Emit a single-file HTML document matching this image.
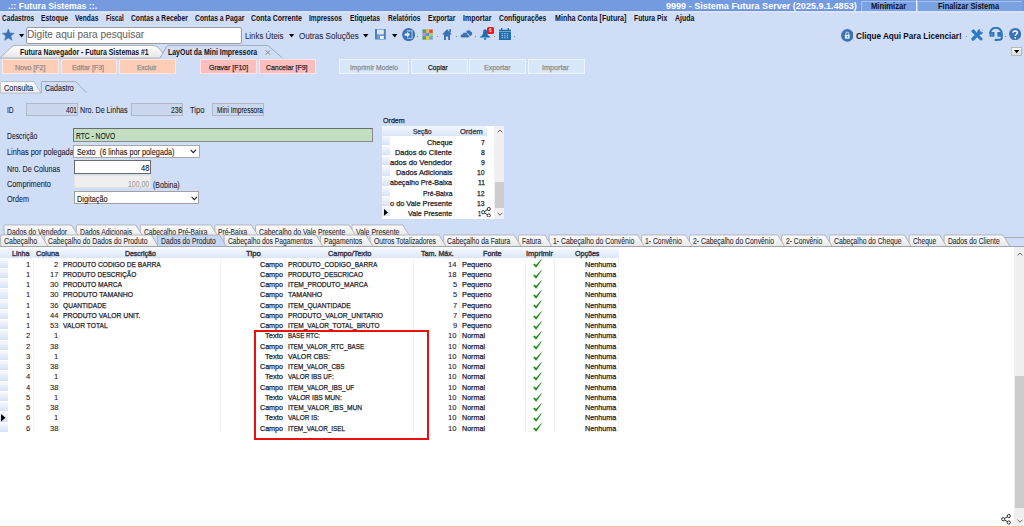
<!DOCTYPE html><html><head><meta charset="utf-8"><style>
html,body{margin:0;padding:0;width:1024px;height:527px;overflow:hidden;background:#d0ddf7}
body{position:relative;font-family:"Liberation Sans",sans-serif}
.t{position:absolute;white-space:pre;line-height:1;transform-origin:0 0;-webkit-text-stroke:0.25px currentColor}
.t.bb{-webkit-text-stroke:0}
.t.tl{-webkit-text-stroke:0.08px currentColor}
.b{position:absolute;display:block}
</style></head><body>
<div class="b" style="left:0px;top:0px;width:1024px;height:11px;background:#749be0"></div>
<div class="b" style="left:0px;top:10px;width:1024px;height:1px;background:#6d96dc"></div>
<div class="t bb" style="left:7.80px;top:2.21px;font-size:9.2px;color:#fff;font-weight:bold;transform:scaleX(0.9483);">.:: Futura Sistemas ::.</div>
<div class="t bb" style="left:665.80px;top:2.21px;font-size:9.2px;color:#fff;font-weight:bold;transform:scaleX(0.9854);">9999 - Sistema Futura Server (2025.9.1.4853)</div>
<div class="b" style="left:861px;top:1px;width:55px;height:10px;background:#7ba2e2;border-top:1px solid #a9c2ee;border-left:1px solid #a9c2ee;box-sizing:border-box"></div>
<div class="b" style="left:916px;top:0px;width:1px;height:11px;background:#e8f0ff"></div>
<div class="b" style="left:917px;top:1px;width:105px;height:10px;background:#7ba2e2;border-top:1px solid #a9c2ee;border-left:1px solid #a9c2ee;box-sizing:border-box"></div>
<div class="t bb" style="left:870.90px;top:2.38px;font-size:9px;color:#111;font-weight:bold;transform:scaleX(0.8480);">Minimizar</div>
<div class="t bb" style="left:937.90px;top:2.38px;font-size:9px;color:#111;font-weight:bold;transform:scaleX(0.8302);">Finalizar Sistema</div>
<div class="b" style="left:0px;top:11px;width:1024px;height:2px;background:#d8e3f8"></div>
<div class="t bb" style="left:1.60px;top:14.07px;font-size:8.9px;color:#101020;font-weight:bold;transform:scaleX(0.7397);">Cadastros</div>
<div class="t bb" style="left:41.00px;top:14.07px;font-size:8.9px;color:#101020;font-weight:bold;transform:scaleX(0.7690);">Estoque</div>
<div class="t bb" style="left:74.80px;top:14.07px;font-size:8.9px;color:#101020;font-weight:bold;transform:scaleX(0.7508);">Vendas</div>
<div class="t bb" style="left:105.70px;top:14.07px;font-size:8.9px;color:#101020;font-weight:bold;transform:scaleX(0.7015);">Fiscal</div>
<div class="t bb" style="left:130.50px;top:14.07px;font-size:8.9px;color:#101020;font-weight:bold;transform:scaleX(0.7581);">Contas a Receber</div>
<div class="t bb" style="left:194.75px;top:14.07px;font-size:8.9px;color:#101020;font-weight:bold;transform:scaleX(0.7640);">Contas a Pagar</div>
<div class="t bb" style="left:251.00px;top:14.07px;font-size:8.9px;color:#101020;font-weight:bold;transform:scaleX(0.7874);">Conta Corrente</div>
<div class="t bb" style="left:309.00px;top:14.07px;font-size:8.9px;color:#101020;font-weight:bold;transform:scaleX(0.7413);">Impressos</div>
<div class="t bb" style="left:350.00px;top:14.07px;font-size:8.9px;color:#101020;font-weight:bold;transform:scaleX(0.7489);">Etiquetas</div>
<div class="t bb" style="left:388.00px;top:14.07px;font-size:8.9px;color:#101020;font-weight:bold;transform:scaleX(0.7468);">Relatórios</div>
<div class="t bb" style="left:428.00px;top:14.07px;font-size:8.9px;color:#101020;font-weight:bold;transform:scaleX(0.7514);">Exportar</div>
<div class="t bb" style="left:463.00px;top:14.07px;font-size:8.9px;color:#101020;font-weight:bold;transform:scaleX(0.7895);">Importar</div>
<div class="t bb" style="left:499.00px;top:14.07px;font-size:8.9px;color:#101020;font-weight:bold;transform:scaleX(0.7623);">Configurações</div>
<div class="t bb" style="left:554.50px;top:14.07px;font-size:8.9px;color:#101020;font-weight:bold;transform:scaleX(0.7991);">Minha Conta [Futura]</div>
<div class="t bb" style="left:633.75px;top:14.07px;font-size:8.9px;color:#101020;font-weight:bold;transform:scaleX(0.7640);">Futura Pix</div>
<div class="t bb" style="left:674.50px;top:14.07px;font-size:8.9px;color:#101020;font-weight:bold;transform:scaleX(0.7867);">Ajuda</div>
<svg class="b" style="left:2px;top:28.9px" width="13" height="12" viewBox="0 0 13 12"><path d="M6.30 -0.10 L7.89 4.02 L12.29 4.25 L8.87 7.03 L10.00 11.30 L6.30 8.90 L2.60 11.30 L3.73 7.03 L0.31 4.25 L4.71 4.02Z" fill="#3a72b5" stroke="#3a72b5" stroke-width="0.5" stroke-linejoin="round"/></svg>
<svg class="b" style="left:18.5px;top:33.5px" width="6" height="4" viewBox="0 0 6 4"><path d="M0 0H5.2L2.6 3.4Z" fill="#000"/></svg>
<div class="b" style="left:25.5px;top:26.5px;width:216px;height:17px;background:#fff;border:1px solid #9a9a9a;border-radius:2px;box-sizing:border-box"></div>
<div class="t tl" style="left:27.30px;top:29.17px;font-size:11.5px;color:#666;transform:scaleX(0.8772);">Digite aqui para pesquisar</div>
<div class="t tl" style="left:244.80px;top:31.91px;font-size:9.2px;color:#2a2a40;transform:scaleX(0.8556);">Links Úteis</div>
<svg class="b" style="left:288.5px;top:34px" width="6" height="4" viewBox="0 0 6 4"><path d="M0 0H5.2L2.6 3.4Z" fill="#000"/></svg>
<div class="t tl" style="left:298.75px;top:31.91px;font-size:9.2px;color:#2a2a40;transform:scaleX(0.8799);">Outras Soluções</div>
<svg class="b" style="left:362.5px;top:33.5px" width="6" height="4" viewBox="0 0 6 4"><path d="M0 0H5.5L2.75 3.4Z" fill="#000"/></svg>
<svg class="b" style="left:375px;top:29px" width="11" height="10.6" viewBox="0 0 11 10.6"><rect x="0" y="0" width="10.8" height="10.6" rx="0.6" fill="#4a80c0"/><rect x="1.8" y="0" width="7.2" height="0.9" fill="#8ab0dc"/><rect x="2" y="0.9" width="6.8" height="4.4" fill="#e2e9f3"/><rect x="2" y="2.8" width="6.8" height="0.9" fill="#e4dcc8"/><rect x="2" y="5.3" width="6.8" height="1.3" fill="#8fb3dc"/><rect x="2" y="7" width="6.8" height="3" fill="#eef3fa"/><rect x="2" y="7" width="3" height="3" fill="#6f9ad0"/></svg>
<svg class="b" style="left:391.5px;top:33.5px" width="6" height="4" viewBox="0 0 6 4"><path d="M0 0H5.5L2.75 3.4Z" fill="#000"/></svg>
<svg class="b" style="left:401.9px;top:27.9px" width="13.2" height="13.2" viewBox="0 0 13.2 13.2"><circle cx="6.6" cy="6.6" r="6.5" fill="#3a72b4"/><path d="M4.8 2.9H10.1V10.3H4.8" fill="none" stroke="#a9c5e6" stroke-width="1.1"/><path d="M2.6 5.5H5.2V3.8L8 6.6L5.2 9.4V7.7H2.6Z" fill="#e8f0fa"/></svg>
<div class="b" style="left:417.0px;top:36px;width:1px;height:1px;background:#7a8aa0"></div>
<div class="b" style="left:436.5px;top:36px;width:1px;height:1px;background:#7a8aa0"></div>
<div class="b" style="left:455.5px;top:36px;width:1px;height:1px;background:#7a8aa0"></div>
<div class="b" style="left:474.7px;top:36px;width:1px;height:1px;background:#7a8aa0"></div>
<div class="b" style="left:494.0px;top:36px;width:1px;height:1px;background:#7a8aa0"></div>
<div class="b" style="left:513.8px;top:36px;width:1px;height:1px;background:#7a8aa0"></div>
<svg class="b" style="left:422.2px;top:28.9px" width="11.3" height="11.1" viewBox="0 0 11.3 11.1"><rect width="11.3" height="11.1" fill="#bcbcbc"/><rect x="0.70" y="0.70" width="3.3" height="3.25" fill="#3daa6c"/><rect x="4.00" y="0.70" width="3.3" height="3.25" fill="#f2b24e"/><rect x="7.30" y="0.70" width="3.3" height="3.25" fill="#e04a36"/><rect x="0.70" y="3.95" width="3.3" height="3.25" fill="#c08ad6"/><rect x="4.00" y="3.95" width="3.3" height="3.25" fill="#5c8ee6"/><rect x="7.30" y="3.95" width="3.3" height="3.25" fill="#9fd65c"/><rect x="0.70" y="7.20" width="3.3" height="3.25" fill="#3aa88c"/><rect x="4.00" y="7.20" width="3.3" height="3.25" fill="#e6d21e"/><rect x="7.30" y="7.20" width="3.3" height="3.25" fill="#6aa6e0"/></svg>
<svg class="b" style="left:442px;top:29px" width="10" height="11" viewBox="0 0 10 11"><path d="M5 0.3L9.9 5.5H0.1Z" fill="#3a6fb0"/><rect x="7.3" y="0.1" width="1.6" height="3.2" fill="#3a6fb0"/><path d="M2 5.2H8V10.9H6.2V7.4H3.8V10.9H2Z" fill="#3a6fb0"/></svg>
<svg class="b" style="left:460px;top:30.4px" width="12.5" height="8.2" viewBox="0 0 12.5 8.2"><path d="M6 2.2C6.4 0.9 7.4 0.2 8.6 0.2C9.8 0.2 10.6 0.9 10.9 1.8C11.9 2 12.3 2.9 12.1 3.9C11.9 5 11 5.8 10 5.9H9.4C9.3 4.2 8 3.2 6.5 3.3Z" fill="#3a6fb0"/><path d="M1.8 7.8H7.8C9 7.8 9.5 7 9.4 6.1C9.3 5.2 8.6 4.6 7.8 4.6C7.6 3.2 6.4 2.3 5 2.3C3.6 2.3 2.6 3.1 2.3 4.3C1 4.4 0.3 5.2 0.3 6.1C0.3 7.1 1 7.8 1.8 7.8Z" fill="#3a6fb0" stroke="#d0ddf7" stroke-width="0.6"/></svg>
<svg class="b" style="left:480px;top:28.6px" width="10.6" height="11.2" viewBox="0 0 10.6 11.2"><path d="M5.1 0.3C6.4 0.3 7 1.5 7.2 3.5C7.4 5.6 8 6.6 10.3 8V8.6H0V8C2.3 6.6 2.9 5.6 3.1 3.5C3.3 1.5 3.8 0.3 5.1 0.3Z" fill="#1f6fb0"/><rect x="4" y="8.8" width="2.3" height="2.2" rx="0.7" fill="#3f84c0"/></svg>
<div class="b" style="left:486.6px;top:26.2px;width:7.8px;height:8.1px;background:#d8e6f8;border-radius:2px"></div>
<div class="b" style="left:487.1px;top:26.8px;width:6.8px;height:6.9px;background:#fa1212;border-radius:1.5px"></div>
<div class="t" style="left:489.30px;top:27.99px;font-size:5.8px;color:#ffd8d8;transform:scaleX(0.7752);">6</div>
<svg class="b" style="left:499.2px;top:27.8px" width="12" height="12.6" viewBox="0 0 12 12.6"><rect x="0" y="1.7" width="11.9" height="1.7" fill="#1c6cb0"/><rect x="2" y="0" width="1.3" height="2.2" fill="#1c6cb0"/><rect x="8.6" y="0" width="1.3" height="2.2" fill="#1c6cb0"/><rect x="0" y="3.8" width="11.9" height="8.7" fill="#1c6cb0"/><rect x="2.60" y="5.20" width="1.5" height="1.1" fill="#a9c6e6"/><rect x="5.15" y="5.20" width="1.5" height="1.1" fill="#a9c6e6"/><rect x="7.70" y="5.20" width="1.5" height="1.1" fill="#a9c6e6"/><rect x="2.60" y="7.20" width="1.5" height="1.1" fill="#a9c6e6"/><rect x="5.15" y="7.20" width="1.5" height="1.1" fill="#a9c6e6"/><rect x="7.70" y="7.20" width="1.5" height="1.1" fill="#a9c6e6"/><rect x="2.60" y="9.20" width="1.5" height="1.1" fill="#a9c6e6"/><rect x="5.15" y="9.20" width="1.5" height="1.1" fill="#a9c6e6"/><rect x="7.70" y="9.20" width="1.5" height="1.1" fill="#a9c6e6"/></svg>
<svg class="b" style="left:840.9px;top:29px" width="12.6" height="12.8" viewBox="0 0 12.6 12.8"><circle cx="6.3" cy="6.4" r="6.3" fill="#3d72b2"/><rect x="3.9" y="5.8" width="4.8" height="4" rx="0.5" fill="#dfe8f4"/><path d="M4.8 5.9V4.4C4.8 2.8 7.8 2.8 7.8 4.4V5.9" fill="none" stroke="#dfe8f4" stroke-width="1"/><rect x="5.9" y="6.9" width="0.8" height="1.6" fill="#3d72b2"/></svg>
<div class="t bb" style="left:856.20px;top:31.80px;font-size:9.1px;color:#0c0c18;font-weight:bold;transform:scaleX(0.8967);">Clique Aqui Para Licenciar!</div>
<div class="b" style="left:966px;top:36px;width:1px;height:1px;background:#7a8aa0"></div>
<svg class="b" style="left:970.5px;top:28.7px" width="12" height="12" viewBox="0 0 12 12"><path d="M2.2 2.2L10 10" stroke="#2a78c8" stroke-width="3" stroke-linecap="round"/><path d="M2 10L8 4" stroke="#2a78c8" stroke-width="3.2" stroke-linecap="round"/><circle cx="9" cy="3" r="2.8" fill="#2a78c8"/><path d="M9.6 -0.4L12.4 2.4L10.8 3.6L8.6 1.4Z" fill="#d0ddf7"/><ellipse cx="2.6" cy="2.4" rx="2" ry="1.7" transform="rotate(45 2.6 2.4)" fill="#2a78c8"/></svg>
<svg class="b" style="left:988.6px;top:27.3px" width="14" height="14.2" viewBox="0 0 14 14.2"><path d="M1 6.6A5.9 5.9 0 0 1 12.8 6.6V10.6Q12.8 12.8 10.6 12.8H6.5" fill="none" stroke="#2f74b8" stroke-width="2"/><rect x="0.5" y="4.9" width="5" height="4.8" rx="0.7" fill="#2f74b8"/><rect x="2.6" y="5.6" width="0.7" height="3.6" fill="#8fb2dc"/><rect x="8.4" y="4.9" width="3.6" height="4.8" rx="0.7" fill="#2f74b8"/><rect x="5.6" y="11.9" width="3.4" height="2.1" rx="0.5" fill="#2f74b8"/></svg>
<div class="b" style="left:1004.5px;top:36px;width:1px;height:1px;background:#7a8aa0"></div>
<svg class="b" style="left:1008.75px;top:28.1px" width="12.2" height="12.2" viewBox="0 0 12.2 12.2"><circle cx="6.1" cy="6.1" r="6.1" fill="#3d72b2"/><path d="M4 4.7C4 2.3 8.4 2.3 8.4 4.7C8.4 6.2 6.2 6.3 6.2 8" fill="none" stroke="#fff" stroke-width="1.5"/><circle cx="6.2" cy="9.8" r="0.9" fill="#fff"/></svg>
<div class="b" style="left:1011.3px;top:46.5px;width:11px;height:9.6px;background:linear-gradient(#fafafa,#dcdcdc);border:1px solid #b8b8b8;box-sizing:border-box"></div>
<svg class="b" style="left:1014px;top:50px" width="6" height="4" viewBox="0 0 6 4"><path d="M0 0H5.4L2.7 3.2Z" fill="#000"/></svg>
<svg class="b" style="left:0;top:44px" width="290" height="15" viewBox="0 0 290 15"><path d="M160 13.8 L166.3 3 Q167.3 1.4 169.5 1.4 H266 Q268 1.4 269 2.4 L282.5 14" fill="none" stroke="#9aa0aa" stroke-width="0.8"/><defs><linearGradient id="tg" x1="0" y1="0" x2="0" y2="1"><stop offset="0" stop-color="#ffffff"/><stop offset="1" stop-color="#e6e6e6"/></linearGradient></defs><path d="M0 14 L12 2.6 Q13.5 1.4 16 1.4 H152 Q156 1.4 158 3.4 L163 9 L160 14Z" fill="url(#tg)" stroke="#a0a4aa" stroke-width="0.8"/></svg>
<div class="t bb" style="left:19.50px;top:49.06px;font-size:8.2px;color:#101020;font-weight:bold;transform:scaleX(0.8444);">Futura Navegador - Futura Sistemas #1</div>
<div class="t bb" style="left:168.40px;top:49.06px;font-size:8.2px;color:#101020;font-weight:bold;transform:scaleX(0.8489);">LayOut da Mini Impressora</div>
<svg class="b" style="left:264.5px;top:50px" width="6" height="5" viewBox="0 0 6 5"><path d="M0.5 0.3L5.3 4.7M5.3 0.3L0.5 4.7" stroke="#8a8a8a" stroke-width="1"/></svg>
<div class="b" style="left:2.2px;top:59.2px;width:56.7px;height:15.3px;background:#fdcdb5;border:1px solid rgba(255,255,255,0.55);box-sizing:border-box"></div>
<div class="t" style="left:14.80px;top:64.30px;font-size:7.8px;color:#8c8c8c;transform:scaleX(0.9020);">Novo [F2]</div>
<div class="b" style="left:60.6px;top:59.2px;width:56.6px;height:15.3px;background:#fdcdb5;border:1px solid rgba(255,255,255,0.55);box-sizing:border-box"></div>
<div class="t" style="left:71.90px;top:64.30px;font-size:7.8px;color:#8c8c8c;transform:scaleX(0.8893);">Editar [F3]</div>
<div class="b" style="left:119px;top:59.2px;width:56.8px;height:15.3px;background:#fdcdb5;border:1px solid rgba(255,255,255,0.55);box-sizing:border-box"></div>
<div class="t" style="left:136.70px;top:64.30px;font-size:7.8px;color:#8c8c8c;transform:scaleX(0.8352);">Excluir</div>
<div class="b" style="left:200.3px;top:59.2px;width:56.4px;height:15.3px;background:#ffbebe;border:1px solid rgba(255,255,255,0.55);box-sizing:border-box"></div>
<div class="t" style="left:208.60px;top:64.30px;font-size:7.8px;color:#2a2a2a;transform:scaleX(0.8931);">Gravar [F10]</div>
<div class="b" style="left:258.9px;top:59.2px;width:56.7px;height:15.3px;background:#ffbebe;border:1px solid rgba(255,255,255,0.55);box-sizing:border-box"></div>
<div class="t" style="left:265.60px;top:64.30px;font-size:7.8px;color:#2a2a2a;transform:scaleX(0.8843);">Cancelar [F9]</div>
<div class="b" style="left:339px;top:59.2px;width:70.4px;height:15.3px;background:#d7e7fc;border:1px solid rgba(255,255,255,0.55);box-sizing:border-box"></div>
<div class="t" style="left:349.70px;top:64.30px;font-size:7.8px;color:#8c8c8c;transform:scaleX(0.8585);">Imprimir Modelo</div>
<div class="b" style="left:410.6px;top:59.2px;width:57.2px;height:15.3px;background:#d7e7fc;border:1px solid rgba(255,255,255,0.55);box-sizing:border-box"></div>
<div class="t" style="left:428.40px;top:64.30px;font-size:7.8px;color:#1a1a1a;transform:scaleX(0.8530);">Copiar</div>
<div class="b" style="left:468.9px;top:59.2px;width:57.1px;height:15.3px;background:#d7e7fc;border:1px solid rgba(255,255,255,0.55);box-sizing:border-box"></div>
<div class="t" style="left:483.75px;top:64.30px;font-size:7.8px;color:#8c8c8c;transform:scaleX(0.9007);">Exportar</div>
<div class="b" style="left:527.5px;top:59.2px;width:57.0px;height:15.3px;background:#d7e7fc;border:1px solid rgba(255,255,255,0.55);box-sizing:border-box"></div>
<div class="t" style="left:541.90px;top:64.30px;font-size:7.8px;color:#8c8c8c;transform:scaleX(0.9298);">Importar</div>
<svg class="b" style="left:0;top:80px" width="100" height="14" viewBox="0 0 100 14"><defs><linearGradient id="tg2" x1="0" y1="0" x2="0" y2="1"><stop offset="0" stop-color="#fbfbfb"/><stop offset="1" stop-color="#ececec"/></linearGradient></defs><path d="M0.4 13 V2.5 Q0.4 1.5 1.5 1.5 H34 L41 13Z" fill="url(#tg2)" stroke="#b0b4ba" stroke-width="0.8"/><path d="M41.4 13 V2.5 Q41.4 1.5 42.5 1.5 H75.8 L86.7 13" fill="none" stroke="#9aa0aa" stroke-width="0.8"/></svg>
<div class="t tl" style="left:3.90px;top:84.39px;font-size:8.4px;color:#202030;transform:scaleX(0.8805);">Consulta</div>
<div class="t tl" style="left:45.00px;top:84.39px;font-size:8.4px;color:#202030;transform:scaleX(0.8434);">Cadastro</div>
<div class="t tl" style="left:6.60px;top:106.29px;font-size:8.4px;color:#1c1c30;transform:scaleX(0.7976);">ID</div>
<div class="b" style="left:25.5px;top:103px;width:52.2px;height:13.3px;background:#cad7ef;border:1px solid #b0b8c8;box-sizing:border-box"></div>
<div class="t tl" style="left:65.60px;top:106.29px;font-size:8.4px;color:#202020;transform:scaleX(0.7851);">401</div>
<div class="t tl" style="left:80.00px;top:106.29px;font-size:8.4px;color:#1c1c30;transform:scaleX(0.8531);">Nro. De Linhas</div>
<div class="b" style="left:131.25px;top:103px;width:51.75px;height:13.3px;background:#cad7ef;border:1px solid #b0b8c8;box-sizing:border-box"></div>
<div class="t tl" style="left:171.25px;top:106.29px;font-size:8.4px;color:#202020;transform:scaleX(0.8029);">236</div>
<div class="t tl" style="left:189.50px;top:106.49px;font-size:8.4px;color:#1c1c30;transform:scaleX(0.8985);">Tipo</div>
<div class="b" style="left:212.2px;top:103px;width:51.5px;height:13.3px;background:#cad7ef;border:1px solid #b0b8c8;box-sizing:border-box"></div>
<div class="t tl" style="left:216.90px;top:106.49px;font-size:8.4px;color:#202020;transform:scaleX(0.7714);">Mini Impressora</div>
<div class="t tl" style="left:6.80px;top:132.19px;font-size:8.4px;color:#1c1c30;transform:scaleX(0.8113);">Descrição</div>
<div class="b" style="left:73.2px;top:128.4px;width:299.5px;height:13.6px;background:#c2dfc0;border:1.5px solid #6c6c6c;border-right-color:#8a8a8a;border-bottom-color:#8a8a8a;box-sizing:border-box"></div>
<div class="t tl" style="left:75.80px;top:131.69px;font-size:8.4px;color:#101010;transform:scaleX(0.7989);">RTC - NOVO</div>
<div class="t tl" style="left:6.80px;top:148.49px;font-size:8.4px;color:#1c1c30;transform:scaleX(0.8800);">Linhas por polegada</div>
<div class="b" style="left:73.2px;top:144.5px;width:126.4px;height:13.1px;background:#fff;border:1px solid #a8a8a8;box-sizing:border-box"></div>
<div class="t tl" style="left:76.60px;top:148.49px;font-size:8.4px;color:#101010;transform:scaleX(0.8726);">Sexto  (6 linhas por polegada)</div>
<svg class="b" style="left:190px;top:149px" width="7" height="5" viewBox="0 0 7 5"><path d="M0.6 0.8L3.3 3.6L6 0.8" fill="none" stroke="#202020" stroke-width="1.1"/></svg>
<div class="t tl" style="left:6.80px;top:164.79px;font-size:8.4px;color:#1c1c30;transform:scaleX(0.8568);">Nro. De Colunas</div>
<div class="b" style="left:73.6px;top:160.3px;width:77.2px;height:13.3px;background:#fff;border:1px solid #6a6a6a;box-sizing:border-box"></div>
<div class="t tl" style="left:141.00px;top:164.39px;font-size:8.4px;color:#101010;transform:scaleX(0.8993);">48</div>
<div class="t tl" style="left:6.80px;top:180.29px;font-size:8.4px;color:#1c1c30;transform:scaleX(0.8727);">Comprimento</div>
<div class="b" style="left:73.6px;top:175.1px;width:77.2px;height:13.1px;background:#efefef;border:1px solid #e4e4e4;box-sizing:border-box"></div>
<div class="t tl" style="left:128.30px;top:179.89px;font-size:8.4px;color:#9a9a9a;transform:scaleX(0.8212);">100,00</div>
<div class="t tl" style="left:153.30px;top:180.59px;font-size:8.4px;color:#1c1c30;transform:scaleX(0.8440);">(Bobina)</div>
<div class="t tl" style="left:6.80px;top:195.49px;font-size:8.4px;color:#1c1c30;transform:scaleX(0.8609);">Ordem</div>
<div class="b" style="left:73.6px;top:190.8px;width:125.6px;height:13.1px;background:#fff;border:1px solid #a0a0a0;box-sizing:border-box"></div>
<div class="t tl" style="left:77.10px;top:195.09px;font-size:8.4px;color:#101010;transform:scaleX(0.8767);">Digitação</div>
<svg class="b" style="left:190.5px;top:195.5px" width="7" height="5" viewBox="0 0 7 5"><path d="M0.6 0.8L3.3 3.6L6 0.8" fill="none" stroke="#202020" stroke-width="1.1"/></svg>
<div class="t" style="left:382.80px;top:117.25px;font-size:7.5px;color:#202030;transform:scaleX(0.9468);">Ordem</div>
<div class="b" style="left:381.9px;top:125.7px;width:122.4px;height:93px;background:#fff"></div>
<div class="b" style="left:381.9px;top:125.7px;width:105.3px;height:10.2px;background:linear-gradient(#f4f8fe,#d8e5f8)"></div>
<div class="b" style="left:493.9px;top:125.7px;width:10.4px;height:93px;background:#f0f0f0"></div>
<div class="b" style="left:494.8px;top:181.7px;width:8.9px;height:26px;background:#cdcdcd"></div>
<svg class="b" style="left:496.5px;top:129px" width="6" height="4" viewBox="0 0 6 4"><path d="M0.6 3.4L3 1L5.4 3.4" fill="none" stroke="#505050" stroke-width="0.9"/></svg>
<svg class="b" style="left:496.5px;top:212px" width="6" height="4" viewBox="0 0 6 4"><path d="M0.6 0.8L3 3.2L5.4 0.8" fill="none" stroke="#505050" stroke-width="0.9"/></svg>
<div class="t" style="left:412.60px;top:127.80px;font-size:7.8px;color:#303040;transform:scaleX(0.8411);">Seção</div>
<div class="t" style="left:459.70px;top:127.80px;font-size:7.8px;color:#303040;transform:scaleX(0.9565);">Ordem</div>
<div class="b" style="left:381.9px;top:135.9px;width:8px;height:10.2px;background:linear-gradient(#f6f9fe,#d6e2f7);border-bottom:1px solid #fff;box-sizing:border-box"></div>
<div class="t" style="left:426.50px;top:138.80px;font-size:7.8px;color:#202028;transform:scaleX(0.9369);">Cheque</div>
<div class="t" style="left:480.93px;top:138.80px;font-size:7.8px;color:#202028;transform:scaleX(0.8700);">7</div>
<div class="b" style="left:381.9px;top:146.1px;width:8px;height:10.2px;background:linear-gradient(#f6f9fe,#d6e2f7);border-bottom:1px solid #fff;box-sizing:border-box"></div>
<div class="t" style="left:395.20px;top:148.96px;font-size:7.8px;color:#202028;transform:scaleX(0.9510);">Dados do Cliente</div>
<div class="t" style="left:480.93px;top:148.96px;font-size:7.8px;color:#202028;transform:scaleX(0.8700);">8</div>
<div class="b" style="left:381.9px;top:156.3px;width:8px;height:10.2px;background:linear-gradient(#f6f9fe,#d6e2f7);border-bottom:1px solid #fff;box-sizing:border-box"></div>
<div class="t" style="left:390.00px;top:159.12px;font-size:7.8px;color:#202028;transform:scaleX(0.9807);">ados do Vendedor</div>
<div class="t" style="left:480.93px;top:159.12px;font-size:7.8px;color:#202028;transform:scaleX(0.8700);">9</div>
<div class="b" style="left:381.9px;top:166.5px;width:8px;height:10.2px;background:linear-gradient(#f6f9fe,#d6e2f7);border-bottom:1px solid #fff;box-sizing:border-box"></div>
<div class="t" style="left:395.60px;top:169.28px;font-size:7.8px;color:#202028;transform:scaleX(0.9443);">Dados Adicionais</div>
<div class="t" style="left:477.15px;top:169.28px;font-size:7.8px;color:#202028;transform:scaleX(0.8700);">10</div>
<div class="b" style="left:381.9px;top:176.7px;width:8px;height:10.2px;background:linear-gradient(#f6f9fe,#d6e2f7);border-bottom:1px solid #fff;box-sizing:border-box"></div>
<div class="t" style="left:390.00px;top:179.44px;font-size:7.8px;color:#202028;transform:scaleX(0.9122);">abeçalho Pré-Baixa</div>
<div class="t" style="left:477.66px;top:179.44px;font-size:7.8px;color:#202028;transform:scaleX(0.8700);">11</div>
<div class="b" style="left:381.9px;top:186.9px;width:8px;height:10.2px;background:linear-gradient(#f6f9fe,#d6e2f7);border-bottom:1px solid #fff;box-sizing:border-box"></div>
<div class="t" style="left:422.70px;top:189.60px;font-size:7.8px;color:#202028;transform:scaleX(0.8582);">Pré-Baixa</div>
<div class="t" style="left:477.15px;top:189.60px;font-size:7.8px;color:#202028;transform:scaleX(0.8700);">12</div>
<div class="b" style="left:381.9px;top:197.1px;width:8px;height:10.2px;background:linear-gradient(#f6f9fe,#d6e2f7);border-bottom:1px solid #fff;box-sizing:border-box"></div>
<div class="t" style="left:390.00px;top:199.76px;font-size:7.8px;color:#202028;transform:scaleX(0.9442);">o do Vale Presente</div>
<div class="t" style="left:477.15px;top:199.76px;font-size:7.8px;color:#202028;transform:scaleX(0.8700);">13</div>
<div class="b" style="left:381.9px;top:207.3px;width:8px;height:10.2px;background:linear-gradient(#f6f9fe,#d6e2f7);border-bottom:1px solid #fff;box-sizing:border-box"></div>
<div class="t" style="left:408.00px;top:209.92px;font-size:7.8px;color:#202028;transform:scaleX(0.9107);">Vale Presente</div>
<div class="b" style="left:454px;top:135.9px;width:1px;height:82.8px;background:#f2f2f2"></div>
<div class="b" style="left:487px;top:135.9px;width:6.9px;height:82.8px;background:#fff"></div>
<div class="t" style="left:478.30px;top:209.90px;font-size:7.8px;color:#202028;transform:scaleX(0.6918);">1</div>
<svg class="b" style="left:384px;top:209px" width="5" height="7" viewBox="0 0 5 7"><path d="M0 0L4 3.4L0 6.8Z" fill="#000"/></svg>
<svg class="b" style="left:481.3px;top:206.9px" width="10.0" height="10.5" viewBox="0 0 10 10.5"><circle cx="2.2" cy="5.2" r="1.6" fill="none" stroke="#303030" stroke-width="1"/><circle cx="7.8" cy="2" r="1.6" fill="none" stroke="#303030" stroke-width="1"/><circle cx="7.8" cy="8.5" r="1.6" fill="none" stroke="#303030" stroke-width="1"/><path d="M3.6 4.4L6.4 2.8M3.6 6L6.4 7.7" stroke="#303030" stroke-width="1"/></svg>

<div class="b" style="left:1004px;top:236.6px;width:20px;height:0.8px;background:#a8acb4"></div>
<svg class="b" style="left:0;top:224.4px" width="1024" height="12.599999999999994" viewBox="0 224.4 1024 12.599999999999994"><defs><linearGradient id="tgx" x1="0" y1="0" x2="0" y2="1"><stop offset="0" stop-color="#fcfcfc"/><stop offset="1" stop-color="#e9e9e9"/></linearGradient></defs><path d="M351.90 236 V226.6 Q351.90 225.4 353.10 225.4 H402.60 L409.60 236Z" fill="url(#tgx)" stroke="none"/><path d="M351.90 236 V226.6 Q351.90 225.4 353.10 225.4 H402.60 L409.60 236" fill="none" stroke="#a4a8b0" stroke-width="0.8"/><path d="M255.40 236 V226.6 Q255.40 225.4 256.60 225.4 H348.85 L355.85 236Z" fill="url(#tgx)" stroke="none"/><path d="M255.40 236 V226.6 Q255.40 225.4 256.60 225.4 H348.85 L355.85 236" fill="none" stroke="#a4a8b0" stroke-width="0.8"/><path d="M214.65 236 V226.6 Q214.65 225.4 215.85 225.4 H251.10 L258.10 236Z" fill="url(#tgx)" stroke="none"/><path d="M214.65 236 V226.6 Q214.65 225.4 215.85 225.4 H251.10 L258.10 236" fill="none" stroke="#a4a8b0" stroke-width="0.8"/><path d="M140.00 236 V226.6 Q140.00 225.4 141.20 225.4 H210.60 L217.60 236Z" fill="url(#tgx)" stroke="none"/><path d="M140.00 236 V226.6 Q140.00 225.4 141.20 225.4 H210.60 L217.60 236" fill="none" stroke="#a4a8b0" stroke-width="0.8"/><path d="M76.10 236 V226.6 Q76.10 225.4 77.30 225.4 H135.40 L142.40 236Z" fill="url(#tgx)" stroke="none"/><path d="M76.10 236 V226.6 Q76.10 225.4 77.30 225.4 H135.40 L142.40 236" fill="none" stroke="#a4a8b0" stroke-width="0.8"/><path d="M3.80 236 V226.6 Q3.80 225.4 5.00 225.4 H71.00 L78.00 236Z" fill="url(#tgx)" stroke="none"/><path d="M3.80 236 V226.6 Q3.80 225.4 5.00 225.4 H71.00 L78.00 236" fill="none" stroke="#a4a8b0" stroke-width="0.8"/></svg>
<div class="t tl" style="left:7.40px;top:228.27px;font-size:8.3px;color:#2a2a30;transform:scaleX(0.8178);">Dados do Vendedor</div>
<div class="t tl" style="left:79.70px;top:228.27px;font-size:8.3px;color:#2a2a30;transform:scaleX(0.8183);">Dados Adicionais</div>
<div class="t tl" style="left:143.60px;top:228.27px;font-size:8.3px;color:#2a2a30;transform:scaleX(0.8082);">Cabeçalho Pré-Baixa</div>
<div class="t tl" style="left:218.25px;top:228.27px;font-size:8.3px;color:#2a2a30;transform:scaleX(0.8024);">Pré-Baixa</div>
<div class="t tl" style="left:259.00px;top:228.27px;font-size:8.3px;color:#2a2a30;transform:scaleX(0.8210);">Cabeçalho do Vale Presente</div>
<div class="t tl" style="left:355.50px;top:228.27px;font-size:8.3px;color:#2a2a30;transform:scaleX(0.8442);">Vale Presente</div>
<svg class="b" style="left:0;top:233.6px" width="1024" height="13.400000000000006" viewBox="0 233.6 1024 13.400000000000006"><defs><linearGradient id="tgx" x1="0" y1="0" x2="0" y2="1"><stop offset="0" stop-color="#fcfcfc"/><stop offset="1" stop-color="#e9e9e9"/></linearGradient></defs><path d="M944.40 246 V235.79999999999998 Q944.40 234.6 945.60 234.6 H1003.35 L1010.35 246Z" fill="url(#tgx)" stroke="none"/><path d="M944.40 246 V235.79999999999998 Q944.40 234.6 945.60 234.6 H1003.35 L1010.35 246" fill="none" stroke="#a4a8b0" stroke-width="0.8"/><path d="M909.40 246 V235.79999999999998 Q909.40 234.6 910.60 234.6 H939.85 L946.85 246Z" fill="url(#tgx)" stroke="none"/><path d="M909.40 246 V235.79999999999998 Q909.40 234.6 910.60 234.6 H939.85 L946.85 246" fill="none" stroke="#a4a8b0" stroke-width="0.8"/><path d="M829.90 246 V235.79999999999998 Q829.90 234.6 831.10 234.6 H904.60 L911.60 246Z" fill="url(#tgx)" stroke="none"/><path d="M829.90 246 V235.79999999999998 Q829.90 234.6 831.10 234.6 H904.60 L911.60 246" fill="none" stroke="#a4a8b0" stroke-width="0.8"/><path d="M781.90 246 V235.79999999999998 Q781.90 234.6 783.10 234.6 H825.35 L832.35 246Z" fill="url(#tgx)" stroke="none"/><path d="M781.90 246 V235.79999999999998 Q781.90 234.6 783.10 234.6 H825.35 L832.35 246" fill="none" stroke="#a4a8b0" stroke-width="0.8"/><path d="M689.65 246 V235.79999999999998 Q689.65 234.6 690.85 234.6 H777.85 L784.85 246Z" fill="url(#tgx)" stroke="none"/><path d="M689.65 246 V235.79999999999998 Q689.65 234.6 690.85 234.6 H777.85 L784.85 246" fill="none" stroke="#a4a8b0" stroke-width="0.8"/><path d="M641.65 246 V235.79999999999998 Q641.65 234.6 642.85 234.6 H685.60 L692.60 246Z" fill="url(#tgx)" stroke="none"/><path d="M641.65 246 V235.79999999999998 Q641.65 234.6 642.85 234.6 H685.60 L692.60 246" fill="none" stroke="#a4a8b0" stroke-width="0.8"/><path d="M549.15 246 V235.79999999999998 Q549.15 234.6 550.35 234.6 H637.60 L644.60 246Z" fill="url(#tgx)" stroke="none"/><path d="M549.15 246 V235.79999999999998 Q549.15 234.6 550.35 234.6 H637.60 L644.60 246" fill="none" stroke="#a4a8b0" stroke-width="0.8"/><path d="M518.40 246 V235.79999999999998 Q518.40 234.6 519.60 234.6 H544.85 L551.85 246Z" fill="url(#tgx)" stroke="none"/><path d="M518.40 246 V235.79999999999998 Q518.40 234.6 519.60 234.6 H544.85 L551.85 246" fill="none" stroke="#a4a8b0" stroke-width="0.8"/><path d="M443.65 246 V235.79999999999998 Q443.65 234.6 444.85 234.6 H514.10 L521.10 246Z" fill="url(#tgx)" stroke="none"/><path d="M443.65 246 V235.79999999999998 Q443.65 234.6 444.85 234.6 H514.10 L521.10 246" fill="none" stroke="#a4a8b0" stroke-width="0.8"/><path d="M369.90 246 V235.79999999999998 Q369.90 234.6 371.10 234.6 H439.10 L446.10 246Z" fill="url(#tgx)" stroke="none"/><path d="M369.90 246 V235.79999999999998 Q369.90 234.6 371.10 234.6 H439.10 L446.10 246" fill="none" stroke="#a4a8b0" stroke-width="0.8"/><path d="M320.40 246 V235.79999999999998 Q320.40 234.6 321.60 234.6 H365.85 L372.85 246Z" fill="url(#tgx)" stroke="none"/><path d="M320.40 246 V235.79999999999998 Q320.40 234.6 321.60 234.6 H365.85 L372.85 246" fill="none" stroke="#a4a8b0" stroke-width="0.8"/><path d="M223.90 246 V235.79999999999998 Q223.90 234.6 225.10 234.6 H315.85 L322.85 246Z" fill="url(#tgx)" stroke="none"/><path d="M223.90 246 V235.79999999999998 Q223.90 234.6 225.10 234.6 H315.85 L322.85 246" fill="none" stroke="#a4a8b0" stroke-width="0.8"/><path d="M44.40 246 V235.79999999999998 Q44.40 234.6 45.60 234.6 H151.10 L158.10 246Z" fill="url(#tgx)" stroke="none"/><path d="M44.40 246 V235.79999999999998 Q44.40 234.6 45.60 234.6 H151.10 L158.10 246" fill="none" stroke="#a4a8b0" stroke-width="0.8"/><path d="M0.40 246 V235.79999999999998 Q0.40 234.6 1.60 234.6 H40.60 L47.60 246Z" fill="url(#tgx)" stroke="none"/><path d="M0.40 246 V235.79999999999998 Q0.40 234.6 1.60 234.6 H40.60 L47.60 246" fill="none" stroke="#a4a8b0" stroke-width="0.8"/><path d="M157.40 246 V235.79999999999998 Q157.40 234.6 158.60 234.6 H219.30 L226.30 246Z" fill="#c6d8f5" stroke="none"/><path d="M157.40 246 V235.79999999999998 Q157.40 234.6 158.60 234.6 H219.30 L226.30 246" fill="none" stroke="#a4a8b0" stroke-width="0.8"/></svg>
<div class="t tl" style="left:3.75px;top:237.37px;font-size:8.3px;color:#2a2a30;transform:scaleX(0.8379);">Cabeçalho</div>
<div class="t tl" style="left:48.00px;top:237.37px;font-size:8.3px;color:#2a2a30;transform:scaleX(0.8262);">Cabeçalho do Dados do Produto</div>
<div class="t tl" style="left:161.00px;top:237.37px;font-size:8.3px;color:#2a2a30;transform:scaleX(0.8176);">Dados do Produto</div>
<div class="t tl" style="left:227.50px;top:237.37px;font-size:8.3px;color:#2a2a30;transform:scaleX(0.8127);">Cabeçalho dos Pagamentos</div>
<div class="t tl" style="left:324.00px;top:237.37px;font-size:8.3px;color:#2a2a30;transform:scaleX(0.8207);">Pagamentos</div>
<div class="t tl" style="left:373.50px;top:237.37px;font-size:8.3px;color:#2a2a30;transform:scaleX(0.8161);">Outros Totalizadores</div>
<div class="t tl" style="left:447.25px;top:237.37px;font-size:8.3px;color:#2a2a30;transform:scaleX(0.8159);">Cabeçalho da Fatura</div>
<div class="t tl" style="left:522.00px;top:237.37px;font-size:8.3px;color:#2a2a30;transform:scaleX(0.8022);">Fatura</div>
<div class="t tl" style="left:552.75px;top:237.37px;font-size:8.3px;color:#2a2a30;transform:scaleX(0.8267);">1- Cabeçalho do Convênio</div>
<div class="t tl" style="left:645.25px;top:237.37px;font-size:8.3px;color:#2a2a30;transform:scaleX(0.8212);">1- Convênio</div>
<div class="t tl" style="left:693.25px;top:237.37px;font-size:8.3px;color:#2a2a30;transform:scaleX(0.8242);">2- Cabeçalho do Convênio</div>
<div class="t tl" style="left:785.50px;top:237.37px;font-size:8.3px;color:#2a2a30;transform:scaleX(0.8100);">2- Convênio</div>
<div class="t tl" style="left:833.50px;top:237.37px;font-size:8.3px;color:#2a2a30;transform:scaleX(0.8172);">Cabeçalho do Cheque</div>
<div class="t tl" style="left:913.00px;top:237.37px;font-size:8.3px;color:#2a2a30;transform:scaleX(0.7997);">Cheque</div>
<div class="t tl" style="left:948.00px;top:237.37px;font-size:8.3px;color:#2a2a30;transform:scaleX(0.8128);">Dados do Cliente</div>
<div class="b" style="left:0px;top:245.8px;width:1024px;height:1px;background:#a0a4ac"></div>
<div class="b" style="left:0px;top:246.8px;width:1024px;height:280px;background:#fff"></div>
<div class="b" style="left:0px;top:246.8px;width:618.6px;height:11.7px;background:linear-gradient(#fafcff,#dae6f8)"></div>
<div class="t" style="left:11.50px;top:249.70px;font-size:7.8px;color:#383848;transform:scaleX(0.9165);-webkit-text-stroke:0.42px currentColor;">Linha</div>
<div class="t" style="left:35.60px;top:249.70px;font-size:7.8px;color:#383848;transform:scaleX(0.9342);-webkit-text-stroke:0.42px currentColor;">Coluna</div>
<div class="t" style="left:124.90px;top:249.70px;font-size:7.8px;color:#383848;transform:scaleX(0.8882);-webkit-text-stroke:0.42px currentColor;">Descrição</div>
<div class="t" style="left:245.60px;top:249.70px;font-size:7.8px;color:#383848;transform:scaleX(0.9877);-webkit-text-stroke:0.42px currentColor;">Tipo</div>
<div class="t" style="left:327.90px;top:249.70px;font-size:7.8px;color:#383848;transform:scaleX(0.9422);-webkit-text-stroke:0.42px currentColor;">Campo/Texto</div>
<div class="t" style="left:420.60px;top:249.70px;font-size:7.8px;color:#383848;transform:scaleX(0.9118);-webkit-text-stroke:0.42px currentColor;">Tam. Máx.</div>
<div class="t" style="left:482.50px;top:249.70px;font-size:7.8px;color:#383848;transform:scaleX(0.9276);-webkit-text-stroke:0.42px currentColor;">Fonte</div>
<div class="t" style="left:525.80px;top:249.70px;font-size:7.8px;color:#383848;transform:scaleX(0.9589);-webkit-text-stroke:0.42px currentColor;">Imprimir</div>
<div class="t" style="left:574.60px;top:249.70px;font-size:7.8px;color:#383848;transform:scaleX(0.9078);-webkit-text-stroke:0.42px currentColor;">Opções</div>
<div class="b" style="left:32.6px;top:258.5px;width:1px;height:174.25px;background:#f1f1f1"></div>
<div class="b" style="left:58.9px;top:258.5px;width:1px;height:174.25px;background:#f1f1f1"></div>
<div class="b" style="left:220.1px;top:258.5px;width:1px;height:174.25px;background:#f1f1f1"></div>
<div class="b" style="left:285.4px;top:258.5px;width:1px;height:174.25px;background:#f1f1f1"></div>
<div class="b" style="left:413.3px;top:258.5px;width:1px;height:174.25px;background:#f1f1f1"></div>
<div class="b" style="left:458.5px;top:258.5px;width:1px;height:174.25px;background:#f1f1f1"></div>
<div class="b" style="left:524.9px;top:258.5px;width:1px;height:174.25px;background:#f1f1f1"></div>
<div class="b" style="left:554.2px;top:258.5px;width:1px;height:174.25px;background:#f1f1f1"></div>
<div class="b" style="left:618.1px;top:258.5px;width:1px;height:174.25px;background:#f1f1f1"></div>
<div class="b" style="left:0px;top:258.5px;width:8.1px;height:10.25px;background:linear-gradient(#f6f9fe,#d6e2f7);border-bottom:1px solid #fff;box-sizing:border-box"></div>
<div class="t tl" style="left:26.37px;top:260.63px;font-size:8.0px;color:#202028;transform:scaleX(0.9500);">1</div>
<div class="t tl" style="left:53.87px;top:260.63px;font-size:8.0px;color:#202028;transform:scaleX(0.9500);">2</div>
<div class="t" style="left:62.70px;top:260.63px;font-size:8.0px;color:#202028;transform:scaleX(0.8304);">PRODUTO CODIGO DE BARRA</div>
<div class="t" style="left:260.00px;top:260.63px;font-size:8.0px;color:#202028;transform:scaleX(0.8917);">Campo</div>
<div class="t" style="left:288.00px;top:260.63px;font-size:8.0px;color:#202028;transform:scaleX(0.8211);">PRODUTO_CODIGO_BARRA</div>
<div class="t tl" style="left:448.30px;top:260.63px;font-size:8.0px;color:#202028;transform:scaleX(0.9500);">14</div>
<div class="t" style="left:461.60px;top:260.63px;font-size:8.0px;color:#202028;transform:scaleX(0.9256);">Pequeno</div>
<svg class="b" style="left:532.6px;top:259.30px" width="9" height="9" viewBox="0 0 9 9"><path d="M0.2 5.5L1.6 4.4L3 6.1L8.3 0.2L8.7 0.8L3.1 8.7Z" fill="#168a16"/></svg>
<div class="t" style="left:585.00px;top:260.63px;font-size:8.0px;color:#202028;transform:scaleX(0.9007);">Nenhuma</div>
<div class="b" style="left:0px;top:268.75px;width:8.1px;height:10.25px;background:linear-gradient(#f6f9fe,#d6e2f7);border-bottom:1px solid #fff;box-sizing:border-box"></div>
<div class="t tl" style="left:26.37px;top:270.88px;font-size:8.0px;color:#202028;transform:scaleX(0.9500);">1</div>
<div class="t tl" style="left:49.65px;top:270.88px;font-size:8.0px;color:#202028;transform:scaleX(0.9500);">17</div>
<div class="t" style="left:62.70px;top:270.88px;font-size:8.0px;color:#202028;transform:scaleX(0.8177);">PRODUTO DESCRIÇÃO</div>
<div class="t" style="left:260.00px;top:270.88px;font-size:8.0px;color:#202028;transform:scaleX(0.8917);">Campo</div>
<div class="t" style="left:288.00px;top:270.88px;font-size:8.0px;color:#202028;transform:scaleX(0.8164);">PRODUTO_DESCRICAO</div>
<div class="t tl" style="left:448.30px;top:270.88px;font-size:8.0px;color:#202028;transform:scaleX(0.9500);">18</div>
<div class="t" style="left:461.60px;top:270.88px;font-size:8.0px;color:#202028;transform:scaleX(0.9256);">Pequeno</div>
<svg class="b" style="left:532.6px;top:269.55px" width="9" height="9" viewBox="0 0 9 9"><path d="M0.2 5.5L1.6 4.4L3 6.1L8.3 0.2L8.7 0.8L3.1 8.7Z" fill="#168a16"/></svg>
<div class="t" style="left:585.00px;top:270.88px;font-size:8.0px;color:#202028;transform:scaleX(0.9007);">Nenhuma</div>
<div class="b" style="left:0px;top:279.0px;width:8.1px;height:10.25px;background:linear-gradient(#f6f9fe,#d6e2f7);border-bottom:1px solid #fff;box-sizing:border-box"></div>
<div class="t tl" style="left:26.37px;top:281.13px;font-size:8.0px;color:#202028;transform:scaleX(0.9500);">1</div>
<div class="t tl" style="left:49.65px;top:281.13px;font-size:8.0px;color:#202028;transform:scaleX(0.9500);">30</div>
<div class="t" style="left:62.70px;top:281.13px;font-size:8.0px;color:#202028;transform:scaleX(0.8314);">PRODUTO MARCA</div>
<div class="t" style="left:260.00px;top:281.13px;font-size:8.0px;color:#202028;transform:scaleX(0.8917);">Campo</div>
<div class="t" style="left:288.00px;top:281.13px;font-size:8.0px;color:#202028;transform:scaleX(0.8269);">ITEM_PRODUTO_MARCA</div>
<div class="t tl" style="left:452.52px;top:281.13px;font-size:8.0px;color:#202028;transform:scaleX(0.9500);">5</div>
<div class="t" style="left:461.60px;top:281.13px;font-size:8.0px;color:#202028;transform:scaleX(0.9256);">Pequeno</div>
<svg class="b" style="left:532.6px;top:279.80px" width="9" height="9" viewBox="0 0 9 9"><path d="M0.2 5.5L1.6 4.4L3 6.1L8.3 0.2L8.7 0.8L3.1 8.7Z" fill="#168a16"/></svg>
<div class="t" style="left:585.00px;top:281.13px;font-size:8.0px;color:#202028;transform:scaleX(0.9007);">Nenhuma</div>
<div class="b" style="left:0px;top:289.25px;width:8.1px;height:10.25px;background:linear-gradient(#f6f9fe,#d6e2f7);border-bottom:1px solid #fff;box-sizing:border-box"></div>
<div class="t tl" style="left:26.37px;top:291.38px;font-size:8.0px;color:#202028;transform:scaleX(0.9500);">1</div>
<div class="t tl" style="left:49.65px;top:291.38px;font-size:8.0px;color:#202028;transform:scaleX(0.9500);">30</div>
<div class="t" style="left:62.70px;top:291.38px;font-size:8.0px;color:#202028;transform:scaleX(0.8618);">PRODUTO TAMANHO</div>
<div class="t" style="left:260.00px;top:291.38px;font-size:8.0px;color:#202028;transform:scaleX(0.8917);">Campo</div>
<div class="t" style="left:288.00px;top:291.38px;font-size:8.0px;color:#202028;transform:scaleX(0.8691);">TAMANHO</div>
<div class="t tl" style="left:452.52px;top:291.38px;font-size:8.0px;color:#202028;transform:scaleX(0.9500);">5</div>
<div class="t" style="left:461.60px;top:291.38px;font-size:8.0px;color:#202028;transform:scaleX(0.9256);">Pequeno</div>
<svg class="b" style="left:532.6px;top:290.05px" width="9" height="9" viewBox="0 0 9 9"><path d="M0.2 5.5L1.6 4.4L3 6.1L8.3 0.2L8.7 0.8L3.1 8.7Z" fill="#168a16"/></svg>
<div class="t" style="left:585.00px;top:291.38px;font-size:8.0px;color:#202028;transform:scaleX(0.9007);">Nenhuma</div>
<div class="b" style="left:0px;top:299.5px;width:8.1px;height:10.25px;background:linear-gradient(#f6f9fe,#d6e2f7);border-bottom:1px solid #fff;box-sizing:border-box"></div>
<div class="t tl" style="left:26.37px;top:301.63px;font-size:8.0px;color:#202028;transform:scaleX(0.9500);">1</div>
<div class="t tl" style="left:49.65px;top:301.63px;font-size:8.0px;color:#202028;transform:scaleX(0.9500);">36</div>
<div class="t" style="left:62.70px;top:301.63px;font-size:8.0px;color:#202028;transform:scaleX(0.8256);">QUANTIDADE</div>
<div class="t" style="left:260.00px;top:301.63px;font-size:8.0px;color:#202028;transform:scaleX(0.8917);">Campo</div>
<div class="t" style="left:288.00px;top:301.63px;font-size:8.0px;color:#202028;transform:scaleX(0.8256);">ITEM_QUANTIDADE</div>
<div class="t tl" style="left:452.52px;top:301.63px;font-size:8.0px;color:#202028;transform:scaleX(0.9500);">7</div>
<div class="t" style="left:461.60px;top:301.63px;font-size:8.0px;color:#202028;transform:scaleX(0.9256);">Pequeno</div>
<svg class="b" style="left:532.6px;top:300.30px" width="9" height="9" viewBox="0 0 9 9"><path d="M0.2 5.5L1.6 4.4L3 6.1L8.3 0.2L8.7 0.8L3.1 8.7Z" fill="#168a16"/></svg>
<div class="t" style="left:585.00px;top:301.63px;font-size:8.0px;color:#202028;transform:scaleX(0.9007);">Nenhuma</div>
<div class="b" style="left:0px;top:309.75px;width:8.1px;height:10.25px;background:linear-gradient(#f6f9fe,#d6e2f7);border-bottom:1px solid #fff;box-sizing:border-box"></div>
<div class="t tl" style="left:26.37px;top:311.88px;font-size:8.0px;color:#202028;transform:scaleX(0.9500);">1</div>
<div class="t tl" style="left:49.65px;top:311.88px;font-size:8.0px;color:#202028;transform:scaleX(0.9500);">44</div>
<div class="t" style="left:62.70px;top:311.88px;font-size:8.0px;color:#202028;transform:scaleX(0.8510);">PRODUTO VALOR UNIT.</div>
<div class="t" style="left:260.00px;top:311.88px;font-size:8.0px;color:#202028;transform:scaleX(0.8917);">Campo</div>
<div class="t" style="left:288.00px;top:311.88px;font-size:8.0px;color:#202028;transform:scaleX(0.8414);">PRODUTO_VALOR_UNITARIO</div>
<div class="t tl" style="left:452.52px;top:311.88px;font-size:8.0px;color:#202028;transform:scaleX(0.9500);">7</div>
<div class="t" style="left:461.60px;top:311.88px;font-size:8.0px;color:#202028;transform:scaleX(0.9256);">Pequeno</div>
<svg class="b" style="left:532.6px;top:310.55px" width="9" height="9" viewBox="0 0 9 9"><path d="M0.2 5.5L1.6 4.4L3 6.1L8.3 0.2L8.7 0.8L3.1 8.7Z" fill="#168a16"/></svg>
<div class="t" style="left:585.00px;top:311.88px;font-size:8.0px;color:#202028;transform:scaleX(0.9007);">Nenhuma</div>
<div class="b" style="left:0px;top:320.0px;width:8.1px;height:10.25px;background:linear-gradient(#f6f9fe,#d6e2f7);border-bottom:1px solid #fff;box-sizing:border-box"></div>
<div class="t tl" style="left:26.37px;top:322.13px;font-size:8.0px;color:#202028;transform:scaleX(0.9500);">1</div>
<div class="t tl" style="left:49.65px;top:322.13px;font-size:8.0px;color:#202028;transform:scaleX(0.9500);">53</div>
<div class="t" style="left:62.70px;top:322.13px;font-size:8.0px;color:#202028;transform:scaleX(0.8313);">VALOR TOTAL</div>
<div class="t" style="left:260.00px;top:322.13px;font-size:8.0px;color:#202028;transform:scaleX(0.8917);">Campo</div>
<div class="t" style="left:288.00px;top:322.13px;font-size:8.0px;color:#202028;transform:scaleX(0.8178);">ITEM_VALOR_TOTAL_BRUTO</div>
<div class="t tl" style="left:452.52px;top:322.13px;font-size:8.0px;color:#202028;transform:scaleX(0.9500);">9</div>
<div class="t" style="left:461.60px;top:322.13px;font-size:8.0px;color:#202028;transform:scaleX(0.9256);">Pequeno</div>
<svg class="b" style="left:532.6px;top:320.80px" width="9" height="9" viewBox="0 0 9 9"><path d="M0.2 5.5L1.6 4.4L3 6.1L8.3 0.2L8.7 0.8L3.1 8.7Z" fill="#168a16"/></svg>
<div class="t" style="left:585.00px;top:322.13px;font-size:8.0px;color:#202028;transform:scaleX(0.9007);">Nenhuma</div>
<div class="b" style="left:0px;top:330.25px;width:8.1px;height:10.25px;background:linear-gradient(#f6f9fe,#d6e2f7);border-bottom:1px solid #fff;box-sizing:border-box"></div>
<div class="t tl" style="left:26.37px;top:332.38px;font-size:8.0px;color:#202028;transform:scaleX(0.9500);">2</div>
<div class="t tl" style="left:53.87px;top:332.38px;font-size:8.0px;color:#202028;transform:scaleX(0.9500);">1</div>
<div class="t" style="left:265.00px;top:332.38px;font-size:8.0px;color:#202028;transform:scaleX(0.9414);">Texto</div>
<div class="t" style="left:288.00px;top:332.38px;font-size:8.0px;color:#202028;transform:scaleX(0.7603);">BASE RTC:</div>
<div class="t tl" style="left:448.30px;top:332.38px;font-size:8.0px;color:#202028;transform:scaleX(0.9500);">10</div>
<div class="t" style="left:462.00px;top:332.38px;font-size:8.0px;color:#202028;transform:scaleX(0.8920);">Normal</div>
<svg class="b" style="left:532.6px;top:331.05px" width="9" height="9" viewBox="0 0 9 9"><path d="M0.2 5.5L1.6 4.4L3 6.1L8.3 0.2L8.7 0.8L3.1 8.7Z" fill="#168a16"/></svg>
<div class="t" style="left:585.00px;top:332.38px;font-size:8.0px;color:#202028;transform:scaleX(0.9007);">Nenhuma</div>
<div class="b" style="left:0px;top:340.5px;width:8.1px;height:10.25px;background:linear-gradient(#f6f9fe,#d6e2f7);border-bottom:1px solid #fff;box-sizing:border-box"></div>
<div class="t tl" style="left:26.37px;top:342.63px;font-size:8.0px;color:#202028;transform:scaleX(0.9500);">2</div>
<div class="t tl" style="left:49.65px;top:342.63px;font-size:8.0px;color:#202028;transform:scaleX(0.9500);">38</div>
<div class="t" style="left:260.00px;top:342.63px;font-size:8.0px;color:#202028;transform:scaleX(0.8917);">Campo</div>
<div class="t" style="left:288.00px;top:342.63px;font-size:8.0px;color:#202028;transform:scaleX(0.7891);">ITEM_VALOR_RTC_BASE</div>
<div class="t tl" style="left:448.30px;top:342.63px;font-size:8.0px;color:#202028;transform:scaleX(0.9500);">10</div>
<div class="t" style="left:462.00px;top:342.63px;font-size:8.0px;color:#202028;transform:scaleX(0.8920);">Normal</div>
<svg class="b" style="left:532.6px;top:341.30px" width="9" height="9" viewBox="0 0 9 9"><path d="M0.2 5.5L1.6 4.4L3 6.1L8.3 0.2L8.7 0.8L3.1 8.7Z" fill="#168a16"/></svg>
<div class="t" style="left:585.00px;top:342.63px;font-size:8.0px;color:#202028;transform:scaleX(0.9007);">Nenhuma</div>
<div class="b" style="left:0px;top:350.75px;width:8.1px;height:10.25px;background:linear-gradient(#f6f9fe,#d6e2f7);border-bottom:1px solid #fff;box-sizing:border-box"></div>
<div class="t tl" style="left:26.37px;top:352.88px;font-size:8.0px;color:#202028;transform:scaleX(0.9500);">3</div>
<div class="t tl" style="left:53.87px;top:352.88px;font-size:8.0px;color:#202028;transform:scaleX(0.9500);">1</div>
<div class="t" style="left:265.00px;top:352.88px;font-size:8.0px;color:#202028;transform:scaleX(0.9414);">Texto</div>
<div class="t" style="left:288.00px;top:352.88px;font-size:8.0px;color:#202028;transform:scaleX(0.8856);">VALOR CBS:</div>
<div class="t tl" style="left:448.30px;top:352.88px;font-size:8.0px;color:#202028;transform:scaleX(0.9500);">10</div>
<div class="t" style="left:462.00px;top:352.88px;font-size:8.0px;color:#202028;transform:scaleX(0.8920);">Normal</div>
<svg class="b" style="left:532.6px;top:351.55px" width="9" height="9" viewBox="0 0 9 9"><path d="M0.2 5.5L1.6 4.4L3 6.1L8.3 0.2L8.7 0.8L3.1 8.7Z" fill="#168a16"/></svg>
<div class="t" style="left:585.00px;top:352.88px;font-size:8.0px;color:#202028;transform:scaleX(0.9007);">Nenhuma</div>
<div class="b" style="left:0px;top:361.0px;width:8.1px;height:10.25px;background:linear-gradient(#f6f9fe,#d6e2f7);border-bottom:1px solid #fff;box-sizing:border-box"></div>
<div class="t tl" style="left:26.37px;top:363.13px;font-size:8.0px;color:#202028;transform:scaleX(0.9500);">3</div>
<div class="t tl" style="left:49.65px;top:363.13px;font-size:8.0px;color:#202028;transform:scaleX(0.9500);">38</div>
<div class="t" style="left:260.00px;top:363.13px;font-size:8.0px;color:#202028;transform:scaleX(0.8917);">Campo</div>
<div class="t" style="left:288.00px;top:363.13px;font-size:8.0px;color:#202028;transform:scaleX(0.7960);">ITEM_VALOR_CBS</div>
<div class="t tl" style="left:448.30px;top:363.13px;font-size:8.0px;color:#202028;transform:scaleX(0.9500);">10</div>
<div class="t" style="left:462.00px;top:363.13px;font-size:8.0px;color:#202028;transform:scaleX(0.8920);">Normal</div>
<svg class="b" style="left:532.6px;top:361.80px" width="9" height="9" viewBox="0 0 9 9"><path d="M0.2 5.5L1.6 4.4L3 6.1L8.3 0.2L8.7 0.8L3.1 8.7Z" fill="#168a16"/></svg>
<div class="t" style="left:585.00px;top:363.13px;font-size:8.0px;color:#202028;transform:scaleX(0.9007);">Nenhuma</div>
<div class="b" style="left:0px;top:371.25px;width:8.1px;height:10.25px;background:linear-gradient(#f6f9fe,#d6e2f7);border-bottom:1px solid #fff;box-sizing:border-box"></div>
<div class="t tl" style="left:26.37px;top:373.38px;font-size:8.0px;color:#202028;transform:scaleX(0.9500);">4</div>
<div class="t tl" style="left:53.87px;top:373.38px;font-size:8.0px;color:#202028;transform:scaleX(0.9500);">1</div>
<div class="t" style="left:265.00px;top:373.38px;font-size:8.0px;color:#202028;transform:scaleX(0.9414);">Texto</div>
<div class="t" style="left:288.00px;top:373.38px;font-size:8.0px;color:#202028;transform:scaleX(0.8061);">VALOR IBS UF:</div>
<div class="t tl" style="left:448.30px;top:373.38px;font-size:8.0px;color:#202028;transform:scaleX(0.9500);">10</div>
<div class="t" style="left:462.00px;top:373.38px;font-size:8.0px;color:#202028;transform:scaleX(0.8920);">Normal</div>
<svg class="b" style="left:532.6px;top:372.05px" width="9" height="9" viewBox="0 0 9 9"><path d="M0.2 5.5L1.6 4.4L3 6.1L8.3 0.2L8.7 0.8L3.1 8.7Z" fill="#168a16"/></svg>
<div class="t" style="left:585.00px;top:373.38px;font-size:8.0px;color:#202028;transform:scaleX(0.9007);">Nenhuma</div>
<div class="b" style="left:0px;top:381.5px;width:8.1px;height:10.25px;background:linear-gradient(#f6f9fe,#d6e2f7);border-bottom:1px solid #fff;box-sizing:border-box"></div>
<div class="t tl" style="left:26.37px;top:383.63px;font-size:8.0px;color:#202028;transform:scaleX(0.9500);">4</div>
<div class="t tl" style="left:49.65px;top:383.63px;font-size:8.0px;color:#202028;transform:scaleX(0.9500);">38</div>
<div class="t" style="left:260.00px;top:383.63px;font-size:8.0px;color:#202028;transform:scaleX(0.8917);">Campo</div>
<div class="t" style="left:288.00px;top:383.63px;font-size:8.0px;color:#202028;transform:scaleX(0.8026);">ITEM_VALOR_IBS_UF</div>
<div class="t tl" style="left:448.30px;top:383.63px;font-size:8.0px;color:#202028;transform:scaleX(0.9500);">10</div>
<div class="t" style="left:462.00px;top:383.63px;font-size:8.0px;color:#202028;transform:scaleX(0.8920);">Normal</div>
<svg class="b" style="left:532.6px;top:382.30px" width="9" height="9" viewBox="0 0 9 9"><path d="M0.2 5.5L1.6 4.4L3 6.1L8.3 0.2L8.7 0.8L3.1 8.7Z" fill="#168a16"/></svg>
<div class="t" style="left:585.00px;top:383.63px;font-size:8.0px;color:#202028;transform:scaleX(0.9007);">Nenhuma</div>
<div class="b" style="left:0px;top:391.75px;width:8.1px;height:10.25px;background:linear-gradient(#f6f9fe,#d6e2f7);border-bottom:1px solid #fff;box-sizing:border-box"></div>
<div class="t tl" style="left:26.37px;top:393.88px;font-size:8.0px;color:#202028;transform:scaleX(0.9500);">5</div>
<div class="t tl" style="left:53.87px;top:393.88px;font-size:8.0px;color:#202028;transform:scaleX(0.9500);">1</div>
<div class="t" style="left:265.00px;top:393.88px;font-size:8.0px;color:#202028;transform:scaleX(0.9414);">Texto</div>
<div class="t" style="left:288.00px;top:393.88px;font-size:8.0px;color:#202028;transform:scaleX(0.8358);">VALOR IBS MUN:</div>
<div class="t tl" style="left:448.30px;top:393.88px;font-size:8.0px;color:#202028;transform:scaleX(0.9500);">10</div>
<div class="t" style="left:462.00px;top:393.88px;font-size:8.0px;color:#202028;transform:scaleX(0.8920);">Normal</div>
<svg class="b" style="left:532.6px;top:392.55px" width="9" height="9" viewBox="0 0 9 9"><path d="M0.2 5.5L1.6 4.4L3 6.1L8.3 0.2L8.7 0.8L3.1 8.7Z" fill="#168a16"/></svg>
<div class="t" style="left:585.00px;top:393.88px;font-size:8.0px;color:#202028;transform:scaleX(0.9007);">Nenhuma</div>
<div class="b" style="left:0px;top:402.0px;width:8.1px;height:10.25px;background:linear-gradient(#f6f9fe,#d6e2f7);border-bottom:1px solid #fff;box-sizing:border-box"></div>
<div class="t tl" style="left:26.37px;top:404.13px;font-size:8.0px;color:#202028;transform:scaleX(0.9500);">5</div>
<div class="t tl" style="left:49.65px;top:404.13px;font-size:8.0px;color:#202028;transform:scaleX(0.9500);">38</div>
<div class="t" style="left:260.00px;top:404.13px;font-size:8.0px;color:#202028;transform:scaleX(0.8917);">Campo</div>
<div class="t" style="left:288.00px;top:404.13px;font-size:8.0px;color:#202028;transform:scaleX(0.8213);">ITEM_VALOR_IBS_MUN</div>
<div class="t tl" style="left:448.30px;top:404.13px;font-size:8.0px;color:#202028;transform:scaleX(0.9500);">10</div>
<div class="t" style="left:462.00px;top:404.13px;font-size:8.0px;color:#202028;transform:scaleX(0.8920);">Normal</div>
<svg class="b" style="left:532.6px;top:402.80px" width="9" height="9" viewBox="0 0 9 9"><path d="M0.2 5.5L1.6 4.4L3 6.1L8.3 0.2L8.7 0.8L3.1 8.7Z" fill="#168a16"/></svg>
<div class="t" style="left:585.00px;top:404.13px;font-size:8.0px;color:#202028;transform:scaleX(0.9007);">Nenhuma</div>
<div class="b" style="left:0px;top:412.25px;width:8.1px;height:10.25px;background:linear-gradient(#f6f9fe,#d6e2f7);border-bottom:1px solid #fff;box-sizing:border-box"></div>
<div class="t tl" style="left:26.37px;top:414.38px;font-size:8.0px;color:#202028;transform:scaleX(0.9500);">6</div>
<div class="t tl" style="left:53.87px;top:414.38px;font-size:8.0px;color:#202028;transform:scaleX(0.9500);">1</div>
<div class="t" style="left:265.00px;top:414.38px;font-size:8.0px;color:#202028;transform:scaleX(0.9414);">Texto</div>
<div class="t" style="left:288.00px;top:414.38px;font-size:8.0px;color:#202028;transform:scaleX(0.8046);">VALOR IS:</div>
<div class="t tl" style="left:448.30px;top:414.38px;font-size:8.0px;color:#202028;transform:scaleX(0.9500);">10</div>
<div class="t" style="left:462.00px;top:414.38px;font-size:8.0px;color:#202028;transform:scaleX(0.8920);">Normal</div>
<svg class="b" style="left:532.6px;top:413.05px" width="9" height="9" viewBox="0 0 9 9"><path d="M0.2 5.5L1.6 4.4L3 6.1L8.3 0.2L8.7 0.8L3.1 8.7Z" fill="#168a16"/></svg>
<div class="t" style="left:585.00px;top:414.38px;font-size:8.0px;color:#202028;transform:scaleX(0.9007);">Nenhuma</div>
<div class="b" style="left:0px;top:422.5px;width:8.1px;height:10.25px;background:linear-gradient(#f6f9fe,#d6e2f7);border-bottom:1px solid #fff;box-sizing:border-box"></div>
<div class="t tl" style="left:26.37px;top:424.63px;font-size:8.0px;color:#202028;transform:scaleX(0.9500);">6</div>
<div class="t tl" style="left:49.65px;top:424.63px;font-size:8.0px;color:#202028;transform:scaleX(0.9500);">38</div>
<div class="t" style="left:260.00px;top:424.63px;font-size:8.0px;color:#202028;transform:scaleX(0.8917);">Campo</div>
<div class="t" style="left:288.00px;top:424.63px;font-size:8.0px;color:#202028;transform:scaleX(0.7930);">ITEM_VALOR_ISEL</div>
<div class="t tl" style="left:448.30px;top:424.63px;font-size:8.0px;color:#202028;transform:scaleX(0.9500);">10</div>
<div class="t" style="left:462.00px;top:424.63px;font-size:8.0px;color:#202028;transform:scaleX(0.8920);">Normal</div>
<svg class="b" style="left:532.6px;top:423.30px" width="9" height="9" viewBox="0 0 9 9"><path d="M0.2 5.5L1.6 4.4L3 6.1L8.3 0.2L8.7 0.8L3.1 8.7Z" fill="#168a16"/></svg>
<div class="t" style="left:585.00px;top:424.63px;font-size:8.0px;color:#202028;transform:scaleX(0.9007);">Nenhuma</div>
<svg class="b" style="left:0.5px;top:413.5px" width="5" height="8" viewBox="0 0 5 8"><path d="M0 0L4.6 3.8L0 7.6Z" fill="#000"/></svg>
<div class="b" style="left:253.6px;top:330px;width:175.1px;height:109.6px;border:2px solid #e81010;box-sizing:border-box"></div>
<div class="b" style="left:1014.2px;top:247px;width:9.8px;height:280px;background:#efefef"></div>
<div class="b" style="left:1015px;top:375.5px;width:9px;height:132.25px;background:#cbcbcb"></div>
<svg class="b" style="left:1016.5px;top:251.5px" width="6" height="4" viewBox="0 0 6 4"><path d="M0.6 3.4L3 1L5.4 3.4" fill="none" stroke="#505050" stroke-width="0.9"/></svg>
<svg class="b" style="left:1016.8px;top:519px" width="6" height="4" viewBox="0 0 6 4"><path d="M0.6 0.8L3 3.2L5.4 0.8" fill="none" stroke="#505050" stroke-width="0.9"/></svg>
<svg class="b" style="left:1001.3px;top:514.1px" width="10.0" height="10.5" viewBox="0 0 10 10.5"><circle cx="2.2" cy="5.2" r="1.6" fill="none" stroke="#303030" stroke-width="1"/><circle cx="7.8" cy="2" r="1.6" fill="none" stroke="#303030" stroke-width="1"/><circle cx="7.8" cy="8.5" r="1.6" fill="none" stroke="#303030" stroke-width="1"/><path d="M3.6 4.4L6.4 2.8M3.6 6L6.4 7.7" stroke="#303030" stroke-width="1"/></svg>
<div class="b" style="left:0px;top:525.8px;width:1024px;height:1.2px;background:#f8c090"></div>
</body></html>
